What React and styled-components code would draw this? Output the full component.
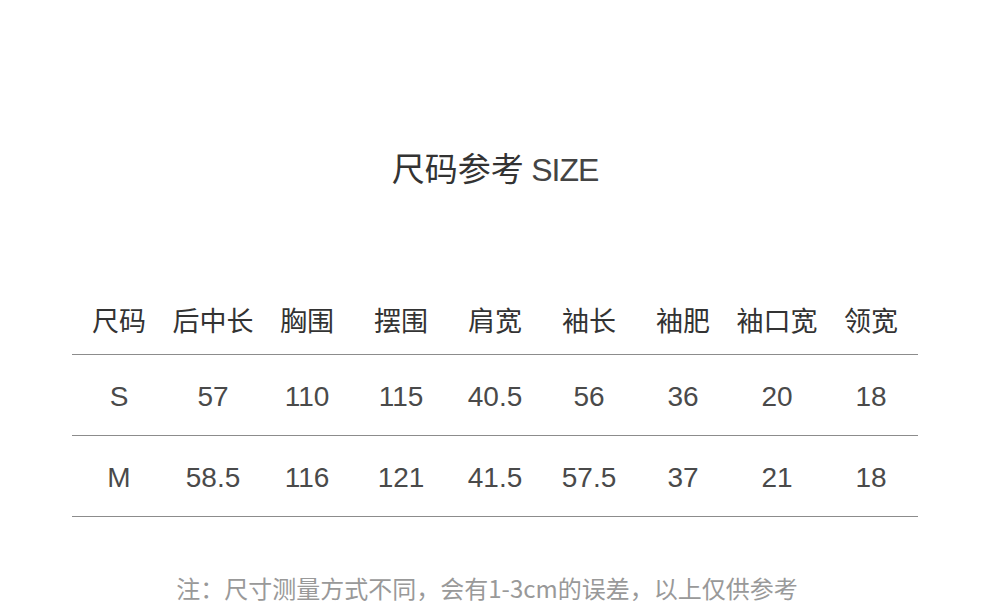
import React from 'react'
import styled, { createGlobalStyle } from 'styled-components'

const GlobalStyle = createGlobalStyle`
    body {
        margin: 0;
        background: #fff;
    }
`

const columns = ['尺码', '后中长', '胸围', '摆围', '肩宽', '袖长', '袖肥', '袖口宽', '领宽']

const rows = [
    ['S', '57', '110', '115', '40.5', '56', '36', '20', '18'],
    ['M', '58.5', '116', '121', '41.5', '57.5', '37', '21', '18']
]

const App = () => (
    <Page>
        <GlobalStyle />
        <Title>
            尺码参考 <Latin>SIZE</Latin>
        </Title>
        <Table>
            <HeadRow>
                {columns.map(c => <HeadCell key = {c}>{c}</HeadCell>)}
            </HeadRow>
            {rows.map(r => (
                <Row key = {r[0]}>
                    {r.map((v, i) => <Cell key = {i}>{v}</Cell>)}
                </Row>
            ))}
        </Table>
        <Note>注：尺寸测量方式不同，会有1-3cm的误差，以上仅供参考</Note>
    </Page>
)

const Page = styled.div `
    width: 990px;
    height: 601px;
    overflow: hidden;
    padding-top: 146px;
    box-sizing: border-box;
    display: flex;
    flex-direction: column;
    align-items: center;
`

const Title = styled.div `
    height: 42px;
    line-height: 42px;
    font-family: "Noto Sans CJK SC", sans-serif;
    font-size: 33px;
    color: #333;
`

const Latin = styled.span `
    font-family: "Liberation Sans", sans-serif;
    font-size: 32px;
    letter-spacing: -1px;
    color: #444;
`

const Table = styled.div `
    width: 846px;
    margin-top: 86px;
`

const HeadRow = styled.div `
    display: grid;
    grid-template-columns: repeat(9, 1fr);
    height: 81px;
    align-items: end;
    padding-bottom: 17px;
    box-sizing: border-box;
    border-bottom: 1px solid #8c8c8c;
`

const HeadCell = styled.div `
    text-align: center;
    font-family: "Noto Sans CJK SC", serif;
    font-size: 27px;
    line-height: 34px;
    color: #333;
`

const Row = styled.div `
    display: grid;
    grid-template-columns: repeat(9, 1fr);
    height: 81px;
    align-items: center;
    box-sizing: border-box;
    border-bottom: 1px solid #8c8c8c;
`

const Cell = styled.div `
    text-align: center;
    font-family: "Liberation Sans", sans-serif;
    font-size: 28px;
    color: #4a4a4a;
    padding-top: 3px;
`

const Note = styled.div `
    margin-top: 55px;
    margin-right: 16px;
    font-family: "Noto Sans CJK SC", sans-serif;
    font-size: 24px;
    line-height: 32px;
    color: #999;
`

export default App
